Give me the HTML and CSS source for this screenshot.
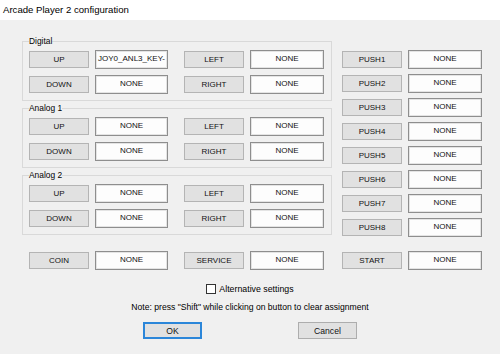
FILE: index.html
```html
<!DOCTYPE html>
<html lang="en">
<head>
  <meta charset="UTF-8" />
  <title>Arcade Player 2 configuration</title>
  <link rel="stylesheet" href="styles.css">
</head>
<body>
  <div class="titlebar">Arcade Player 2 configuration</div>

  <div class="dialog">
    <div class="panels">
      <div class="groups">
        <fieldset class="group">
          <legend>Digital</legend>
          <div class="row">
            <button class="key">UP</button><div class="bind">JOY0_ANL3_KEY-</div>
            <button class="key dir">LEFT</button><div class="bind wide">NONE</div>
          </div>
          <div class="row">
            <button class="key">DOWN</button><div class="bind">NONE</div>
            <button class="key dir">RIGHT</button><div class="bind wide">NONE</div>
          </div>
        </fieldset>

        <fieldset class="group">
          <legend>Analog 1</legend>
          <div class="row">
            <button class="key">UP</button><div class="bind">NONE</div>
            <button class="key dir">LEFT</button><div class="bind wide">NONE</div>
          </div>
          <div class="row">
            <button class="key">DOWN</button><div class="bind">NONE</div>
            <button class="key dir">RIGHT</button><div class="bind wide">NONE</div>
          </div>
        </fieldset>

        <fieldset class="group">
          <legend>Analog 2</legend>
          <div class="row">
            <button class="key">UP</button><div class="bind">NONE</div>
            <button class="key dir">LEFT</button><div class="bind wide">NONE</div>
          </div>
          <div class="row">
            <button class="key">DOWN</button><div class="bind">NONE</div>
            <button class="key dir">RIGHT</button><div class="bind wide">NONE</div>
          </div>
        </fieldset>
      </div>

      <div class="pushes">
        <div class="row"><button class="key">PUSH1</button><div class="bind wide">NONE</div></div>
        <div class="row"><button class="key">PUSH2</button><div class="bind wide">NONE</div></div>
        <div class="row"><button class="key">PUSH3</button><div class="bind wide">NONE</div></div>
        <div class="row"><button class="key">PUSH4</button><div class="bind wide">NONE</div></div>
        <div class="row"><button class="key">PUSH5</button><div class="bind wide">NONE</div></div>
        <div class="row"><button class="key">PUSH6</button><div class="bind wide">NONE</div></div>
        <div class="row"><button class="key">PUSH7</button><div class="bind wide">NONE</div></div>
        <div class="row"><button class="key">PUSH8</button><div class="bind wide">NONE</div></div>
      </div>
    </div>

    <div class="row system">
      <button class="key">COIN</button><div class="bind">NONE</div>
      <button class="key dir">SERVICE</button><div class="bind wide">NONE</div>
      <button class="key start">START</button><div class="bind wide">NONE</div>
    </div>

    <label class="alt"><input type="checkbox" /> Alternative settings</label>
    <p class="note">Note: press "Shift" while clicking on button to clear assignment</p>

    <div class="actions">
      <button class="action ok">OK</button>
      <button class="action">Cancel</button>
    </div>
  </div>
</body>
</html>
```

FILE: styles.css
```css
* {
  box-sizing: border-box;
}

body {
  margin: 0;
  width: 500px;
  height: 354px;
  overflow: hidden;
  font-family: 'Liberation Sans', Arial, sans-serif;
  font-size: 8px;
  color: #000;
  background-color: #f0f0f0;
}

.titlebar {
  height: 20px;
  padding: 4px 0 0 3px;
  background-color: #fff;
  font-size: 9.6px;
  line-height: 12px;
}

.dialog {
  padding: 16px 0 0 22px;
}

.panels {
  display: flex;
  align-items: flex-start;
}

.group {
  margin: 2px 0 0 0;
  padding: 4px 7px 6px 6px;
  border: 1px solid #d9d9d9;
  min-width: 0;
}

.group:first-child {
  margin-top: 0;
}

.group legend {
  padding: 0;
  font-size: 8.4px;
  line-height: 10px;
}

.row {
  display: flex;
  align-items: center;
  height: 19px;
}

.group .row + .row {
  margin-top: 6px;
}

.key {
  width: 60px;
  height: 17px;
  padding: 0;
  border: 1px solid #b4b4b4;
  background-color: #e1e1e1;
  font-family: inherit;
  font-size: 8px;
  color: #111;
}

.bind {
  width: 73px;
  height: 19px;
  margin-left: 6px;
  padding-top: 3px;
  border: 1px solid #8e8e8e;
  box-shadow: inset 0 0 0 1px #e4e4e4;
  background-color: #fdfdfd;
  text-align: center;
  line-height: 10px;
  white-space: nowrap;
  overflow: hidden;
  color: #111;
}

.bind.wide {
  width: 74px;
}

.dir {
  margin-left: 16px;
}

.pushes {
  margin: 14px 0 0 10px;
}

.pushes .row + .row {
  margin-top: 5px;
}

.system {
  margin: 14px 0 0 7px;
}

.start {
  margin-left: 18px;
}

.alt {
  display: flex;
  align-items: center;
  justify-content: center;
  gap: 3px;
  width: 456px;
  margin-top: 13px;
  height: 12px;
  font-size: 8.8px;
}

.alt input {
  appearance: none;
  width: 10px;
  height: 10px;
  margin: 0;
  border: 1px solid #333;
  background-color: #fff;
}

.note {
  width: 456px;
  margin: 7px 0 0 0;
  text-align: center;
  font-size: 8.6px;
  line-height: 10px;
}

.actions {
  display: flex;
  justify-content: center;
  gap: 96px;
  width: 456px;
  margin-top: 10px;
}

.action {
  width: 59px;
  height: 17px;
  padding: 0;
  border: 1px solid #adadad;
  background-color: #e1e1e1;
  font-family: inherit;
  font-size: 8.6px;
  color: #111;
}

.ok {
  border: 2px solid #2b86d9;
}
```
